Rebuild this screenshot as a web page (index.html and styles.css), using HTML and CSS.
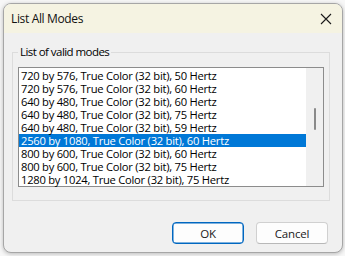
FILE: index.html
```html
<!DOCTYPE html>
<html>
<head>
<meta charset="utf-8">
<link rel="stylesheet" href="styles.css">
</head>
<body>
<div class="window">
  <div class="titlebar">
    <span class="title">List All Modes</span>
    <svg class="close" width="12" height="12" viewBox="0 0 12 12"><path d="M1 1 L11 11 M11 1 L1 11" stroke="#1a1a1a" stroke-width="1.1" fill="none"/></svg>
  </div>
  <div class="content">
    <fieldset class="group">
      <legend>List of valid modes</legend>
      <div class="listbox">
        <ul class="items">
          <li>720 by 576, True Color (32 bit), 50 Hertz</li>
          <li>720 by 576, True Color (32 bit), 60 Hertz</li>
          <li>640 by 480, True Color (32 bit), 60 Hertz</li>
          <li>640 by 480, True Color (32 bit), 75 Hertz</li>
          <li>640 by 480, True Color (32 bit), 59 Hertz</li>
          <li class="selected">2560 by 1080, True Color (32 bit), 60 Hertz</li>
          <li>800 by 600, True Color (32 bit), 60 Hertz</li>
          <li>800 by 600, True Color (32 bit), 75 Hertz</li>
          <li>1280 by 1024, True Color (32 bit), 75 Hertz</li>
        </ul>
        <div class="scrollbar"><div class="thumb"></div></div>
      </div>
    </fieldset>
    <div class="buttons">
      <button class="btn default">OK</button>
      <button class="btn">Cancel</button>
    </div>
  </div>
</div>
</body>
</html>
```
FILE: styles.css
```css
html, body {
  margin: 0;
  padding: 0;
}
body {
  width: 345px;
  height: 256px;
  background: #f7f7f7;
  font-family: "Open Sans", "Noto Sans", sans-serif;
  font-size: 11px;
  color: #000;
  overflow: hidden;
}
.window {
  box-sizing: border-box;
  margin: 3px 0 0 3px;
  width: 340px;
  height: 250px;
  border: 1px solid #a6a6a6;
  border-radius: 8px;
  background: #f0f0f0;
  overflow: hidden;
  box-shadow: 0 1px 4px rgba(0,0,0,0.25);
  display: flex;
  flex-direction: column;
}
.titlebar {
  height: 29px;
  flex: none;
  background: #f5f3e2;
  display: flex;
  align-items: center;
  justify-content: space-between;
  padding: 0 10px 0 7px;
}
.title {
  font-size: 12px;
  color: #111;
  letter-spacing: -0.35px;
}
.close {
  display: block;
}
.content {
  flex: 1;
  display: flex;
  flex-direction: column;
  padding: 11px 0 0 8px;
}
.group {
  box-sizing: border-box;
  margin: 0;
  width: 318px;
  padding: 7px 5px 13px 5px;
  border: 1px solid #dcdcdc;
  min-width: 0;
}
.group legend {
  padding: 0 2px;
  line-height: 16px;
  font-size: 11.5px;
  color: #000;
  letter-spacing: -0.55px;
}
.listbox {
  box-sizing: border-box;
  width: 306px;
  height: 120px;
  border: 1px solid #8c8c8c;
  background: #fff;
  display: grid;
  grid-template-columns: 1fr 17px;
}
.items {
  list-style: none;
  margin: 0;
  padding: 1px 0 0 0;
}
.items li {
  height: 13px;
  line-height: 13px;
  padding-left: 2px;
  white-space: nowrap;
  font-size: 11.2px;
  letter-spacing: -0.25px;
}
.items li.selected {
  background: #0078d7;
  color: #fff;
}
.scrollbar {
  background: #f0f0f0;
  display: flex;
  justify-content: center;
  padding-top: 40px;
}
.thumb {
  width: 2px;
  height: 22px;
  border-radius: 1px;
  background: #8a8a8a;
}
.buttons {
  display: flex;
  justify-content: flex-end;
  gap: 12px;
  padding: 21px 14px 0 0;
}
.btn {
  box-sizing: border-box;
  width: 72px;
  height: 22px;
  border: 1px solid #d0d0d0;
  border-bottom-color: #b8b8b8;
  border-radius: 4px;
  background: #fdfdfd;
  font-family: "Open Sans", "Noto Sans", sans-serif;
  font-size: 11.5px;
  color: #1a1a1a;
  padding: 0;
  letter-spacing: -0.2px;
}
.btn.default {
  border: 1px solid #0067c0;
  box-shadow: inset 0 0 0 0.5px #0067c0;
}
```
